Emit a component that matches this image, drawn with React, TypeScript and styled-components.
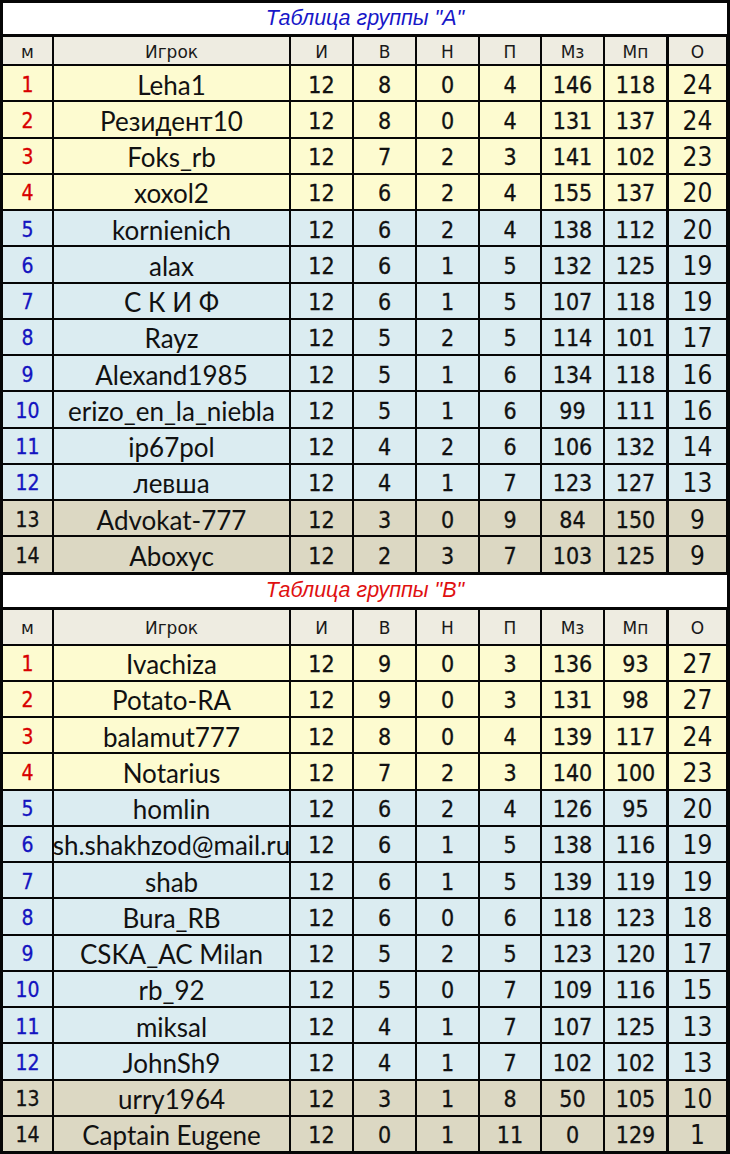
import React from "react";
import styled, { createGlobalStyle } from "styled-components";

const GlobalStyle = createGlobalStyle`
  html, body { margin: 0; padding: 0; background: #060606; }
`;

type Row = [string, number, number, number, number, number, number, number];

const groupA: Row[] = [
  ["Leha1", 12, 8, 0, 4, 146, 118, 24],
  ["Резидент10", 12, 8, 0, 4, 131, 137, 24],
  ["Foks_rb", 12, 7, 2, 3, 141, 102, 23],
  ["xoxol2", 12, 6, 2, 4, 155, 137, 20],
  ["kornienich", 12, 6, 2, 4, 138, 112, 20],
  ["alax", 12, 6, 1, 5, 132, 125, 19],
  ["С К И Ф", 12, 6, 1, 5, 107, 118, 19],
  ["Rayz", 12, 5, 2, 5, 114, 101, 17],
  ["Alexand1985", 12, 5, 1, 6, 134, 118, 16],
  ["erizo_en_la_niebla", 12, 5, 1, 6, 99, 111, 16],
  ["ip67pol", 12, 4, 2, 6, 106, 132, 14],
  ["левша", 12, 4, 1, 7, 123, 127, 13],
  ["Advokat-777", 12, 3, 0, 9, 84, 150, 9],
  ["Aboxyc", 12, 2, 3, 7, 103, 125, 9],
];

const groupB: Row[] = [
  ["Ivachiza", 12, 9, 0, 3, 136, 93, 27],
  ["Potato-RA", 12, 9, 0, 3, 131, 98, 27],
  ["balamut777", 12, 8, 0, 4, 139, 117, 24],
  ["Notarius", 12, 7, 2, 3, 140, 100, 23],
  ["homlin", 12, 6, 2, 4, 126, 95, 20],
  ["sh.shakhzod@mail.ru", 12, 6, 1, 5, 138, 116, 19],
  ["shab", 12, 6, 1, 5, 139, 119, 19],
  ["Bura_RB", 12, 6, 0, 6, 118, 123, 18],
  ["CSKA_AC Milan", 12, 5, 2, 5, 123, 120, 17],
  ["rb_92", 12, 5, 0, 7, 109, 116, 15],
  ["miksal", 12, 4, 1, 7, 107, 125, 13],
  ["JohnSh9", 12, 4, 1, 7, 102, 102, 13],
  ["urry1964", 12, 3, 1, 8, 50, 105, 10],
  ["Captain Eugene", 12, 0, 1, 11, 0, 129, 1],
];

type Zone = "top" | "mid" | "low";

const zoneBg: Record<Zone, string> = {
  top: "#fdfbd0",
  mid: "#dbecf1",
  low: "#dcd8c3",
};

const zoneColor: Record<Zone, string> = {
  top: "#d80000",
  mid: "#1414c0",
  low: "#111111",
};

const numFont = `"DejaVu Sans Condensed", "DejaVu Sans", Tahoma, sans-serif`;

const Page = styled.div`
  width: 730px;
  height: 1154px;
  box-sizing: border-box;
  padding: 3px;
  background: #060606;
  display: flex;
  flex-direction: column;
  gap: 3px;
`;

const Group = styled.section`
  display: flex;
  flex-direction: column;
`;

const Title = styled.div<{ $color: string; $h: number }>`
  height: ${(p) => p.$h}px;
  background: #ffffff;
  display: flex;
  align-items: center;
  justify-content: center;
  font-family: "Liberation Sans", Arial, sans-serif;
  font-style: italic;
  font-size: 21.5px;
  color: ${(p) => p.$color};
  margin-bottom: 3px;
`;

const Grid = styled.div<{ $h: number }>`
  display: grid;
  grid-template-columns: 49px 235px 61px 61px 61px 60px 61px 61px 58px;
  column-gap: 2px;
  height: ${(p) => p.$h}px;
  margin-bottom: 2px;
  &:last-child { margin-bottom: 0; }
`;

const HeadCell = styled.div<{ $thick?: boolean }>`
  background: #eeece1;
  display: flex;
  align-items: center;
  justify-content: center;
  font-family: "DejaVu Sans", Verdana, sans-serif;
  font-size: 17px;
  color: #1a1a1a;
  padding-top: 2px;
  box-sizing: border-box;
  ${(p) => (p.$thick ? "margin-left: 1px;" : "")}
`;

const Cell = styled.div<{ $zone: Zone; $thick?: boolean }>`
  background: ${(p) => zoneBg[p.$zone]};
  display: flex;
  align-items: center;
  justify-content: center;
  overflow: hidden;
  white-space: nowrap;
  padding-top: 3px;
  box-sizing: border-box;
  ${(p) => (p.$thick ? "margin-left: 1px;" : "")}
`;

const Place = styled.span<{ $zone: Zone }>`
  font-family: ${numFont};
  font-stretch: condensed;
  font-size: 21px;
  color: ${(p) => zoneColor[p.$zone]};
  -webkit-text-stroke: 0.3px ${(p) => zoneColor[p.$zone]};
`;

const Name = styled.span`
  font-family: Lato, "Open Sans", sans-serif;
  font-size: 26px;
  color: #111111;
  flex-shrink: 0;
`;

const Num = styled.span`
  font-family: ${numFont};
  font-stretch: condensed;
  font-size: 23px;
  color: #111111;
  -webkit-text-stroke: 0.3px #111111;
`;

const Points = styled.span`
  font-family: ${numFont};
  font-stretch: condensed;
  font-size: 26px;
  color: #111111;
`;

const headers = ["м", "Игрок", "И", "В", "Н", "П", "Мз", "Мп", "О"];
const ROW_H = 34.25;

function zoneOf(i: number): Zone {
  if (i < 4) return "top";
  if (i < 12) return "mid";
  return "low";
}

function Table({
  title,
  color,
  titleH,
  headH,
  rows,
}: {
  title: string;
  color: string;
  titleH: number;
  headH: number;
  rows: Row[];
}) {
  return (
    <Group>
      <Title $color={color} $h={titleH}>
        {title}
      </Title>
      <Grid $h={headH}>
        {headers.map((h, i) => (
          <HeadCell key={h} $thick={i === 8}>
            {h}
          </HeadCell>
        ))}
      </Grid>
      {rows.map((r, i) => {
        const z = zoneOf(i);
        return (
          <Grid $h={ROW_H} key={i}>
            <Cell $zone={z}>
              <Place $zone={z}>{i + 1}</Place>
            </Cell>
            <Cell $zone={z}>
              <Name>{r[0]}</Name>
            </Cell>
            {r.slice(1, 7).map((v, j) => (
              <Cell $zone={z} key={j}>
                <Num>{v}</Num>
              </Cell>
            ))}
            <Cell $zone={z} $thick>
              <Points>{r[7]}</Points>
            </Cell>
          </Grid>
        );
      })}
    </Group>
  );
}

export default function App() {
  return (
    <>
      <GlobalStyle />
      <Page>
        <Table
          title={'Таблица группы "A"'}
          color="#1717c8"
          titleH={31}
          headH={27}
          rows={groupA}
        />
        <Table
          title={'Таблица группы "B"'}
          color="#e01010"
          titleH={32}
          headH={34}
          rows={groupB}
        />
      </Page>
    </>
  );
}
